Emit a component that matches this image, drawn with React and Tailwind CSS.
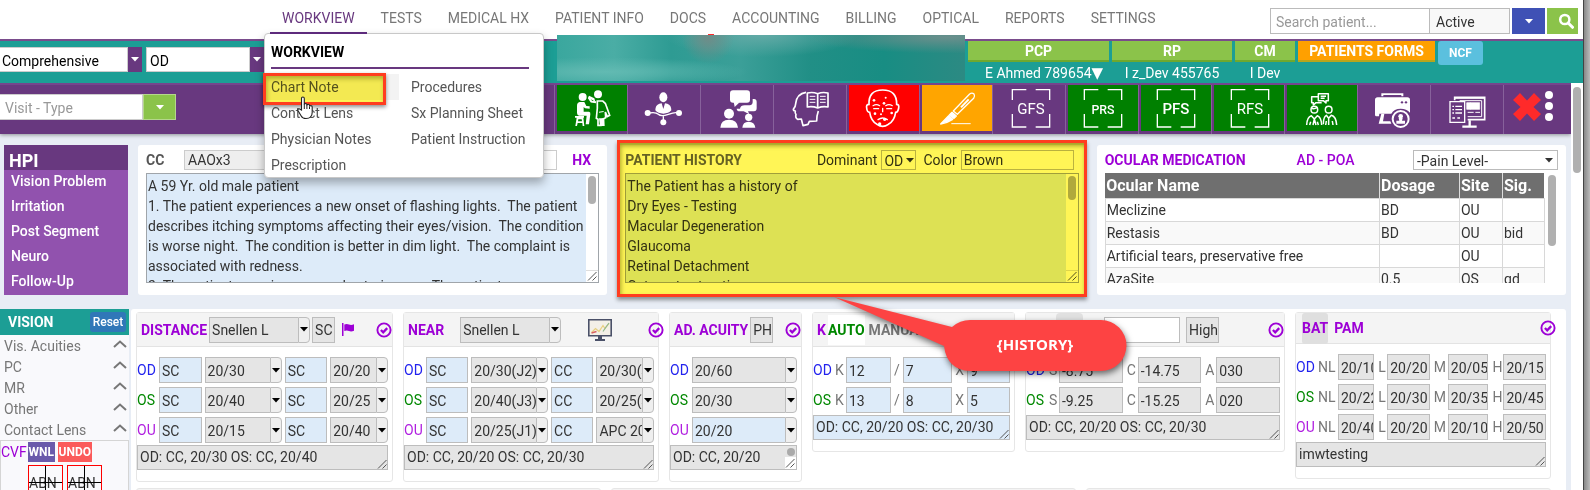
import React from "react";

const NAV = ["WORKVIEW", "TESTS", "MEDICAL HX", "PATIENT INFO", "DOCS", "ACCOUNTING", "BILLING", "OPTICAL", "REPORTS", "SETTINGS"];

const MENU = [
  ["Chart Note", "Procedures"],
  ["Contact Lens", "Sx Planning Sheet"],
  ["Physician Notes", "Patient Instruction"],
  ["Prescription", ""],
];

const MEDS = [
  ["Meclizine", "BD", "OU", ""],
  ["Restasis", "BD", "OU", "bid"],
  ["Artificial tears, preservative free", "", "OU", ""],
  ["AzaSite", "0.5", "OS", "qd"],
];

const COMPLAINT = `A 59 Yr. old male patient
1. The patient experiences a new onset of flashing lights.  The patient
describes itching symptoms affecting their eyes/vision.  The condition
is worse night.  The condition is better in dim light.  The complaint is
associated with redness.
2. The patient experiences a red exterior eye.  The patient`;

const HISTORY = `The Patient has a history of
Dry Eyes - Testing
Macular Degeneration
Glaucoma
Retinal Detachment
Cataract extraction`;

const EYE = { OD: "text-[#2222ee]", OS: "text-[#008800]", OU: "text-[#b01fe0]" };

function Caret({ className = "text-black" }) {
  return (
    <svg viewBox="0 0 8 5" className={`h-[5px] w-2 shrink-0 ${className}`} aria-hidden="true">
      <path d="M0 0h8L4 4.5z" fill="currentColor" />
    </svg>
  );
}

function Check({ className = "" }) {
  return (
    <svg viewBox="0 0 16 16" className={`size-4 shrink-0 ${className}`} fill="none" stroke="#9d00d6" aria-hidden="true">
      <circle cx="8" cy="8" r="6.6" strokeWidth="1.9" />
      <path d="M4.9 8l2.3 2.3 4-4.2" strokeWidth="2.3" />
    </svg>
  );
}

function Grip() {
  return (
    <svg viewBox="0 0 10 10" className="pointer-events-none col-start-1 row-start-1 mr-px mb-px size-[10px] self-end justify-self-end" stroke="#555" strokeWidth="1" aria-hidden="true">
      <path d="M1 9.5L9.5 1M5.5 9.5L9.5 5.5" />
    </svg>
  );
}

function Box({ value, label, blue = false, className = "" }) {
  return (
    <input
      aria-label={label}
      defaultValue={value}
      className={`h-[26px] min-w-0 border border-[#bdbdbd] pt-px pl-[2px] text-[#333] ${blue ? "bg-[#ddebf9]" : "bg-[#e5e5e5]"} ${className}`}
    />
  );
}

function Combo({ value, label, blue = false, className = "" }) {
  return (
    <div className={`flex min-w-0 ${className}`}>
      <Box value={value} label={label} blue={blue} className="flex-1 border-r-0" />
      <button aria-label={`${label} options`} className="flex w-3 shrink-0 items-center justify-center rounded-r-[4px] border border-[#bdbdbd] bg-[#efefef]">
        <Caret />
      </button>
    </div>
  );
}

function Card({ header, headerClass = "h-[34px]", children }) {
  return (
    <section className="min-w-0 rounded-[3px] border border-[#e6e6e6] bg-white">
      <div className={`flex items-center border-b border-[#e3e3e3] bg-[#f4f4f4] pl-1 ${headerClass}`}>{header}</div>
      <div className="pt-[10px] pr-1 pb-[11px]">{children}</div>
    </section>
  );
}

function Title({ children }) {
  return <h3 className="font-bold whitespace-nowrap text-[#9d00d6]">{children}</h3>;
}

function EyeRow({ eye, children }) {
  return (
    <div className="mb-1 flex items-center last:mb-0">
      <span className={`w-[22px] shrink-0 ${EYE[eye]}`}>{eye}</span>
      {children}
    </div>
  );
}

function Summary({ value, label, blue = false }) {
  return (
    <div className="mt-[2px] grid">
      <textarea
        aria-label={label}
        defaultValue={value}
        rows={1}
        className={`col-start-1 row-start-1 block h-[25px] w-full resize-none overflow-hidden border border-[#bdbdbd] pt-px pl-[2px] leading-5 text-[#333] ${blue ? "bg-[#ddebf9]" : "bg-[#e5e5e5]"}`}
      />
      <Grip />
    </div>
  );
}

function AcuityRows({ rows, name }) {
  return (
    <div>
      {rows.map(([eye, a, b, c, d]) => (
        <EyeRow key={eye} eye={eye}>
          <div className="flex min-w-0 flex-1 gap-[3px]">
            <Box value={a} label={`${name} ${eye} correction 1`} blue className="flex-40" />
            <Combo value={b} label={`${name} ${eye} acuity 1`} className="flex-80" />
            <Box value={c} label={`${name} ${eye} correction 2`} blue className="flex-40" />
            <Combo value={d} label={`${name} ${eye} acuity 2`} className="flex-60" />
          </div>
        </EyeRow>
      ))}
    </div>
  );
}

function NoteArea({ value, label, thumb }) {
  return (
    <div className="mt-[3px] flex h-[110px] border border-[#a0a5aa]">
      <textarea
        aria-label={label}
        defaultValue={value}
        className="block min-w-0 flex-1 resize-none overflow-hidden bg-[#ddebf9] pt-[2px] pl-px leading-5 whitespace-pre text-[#333]"
      />
      <div className="flex w-3 flex-col items-center bg-white pt-[2px]">
        <div className={`w-2 rounded-full bg-[#b0b0b0] ${thumb}`} />
        <div className="mt-auto grid h-[12px] w-full border-t border-[#ddd]">
          <Grip />
        </div>
      </div>
    </div>
  );
}

function Frame({ text, x = 52, size = 45, weight = 400 }) {
  return (
    <g>
      <path
        d={`M${x} 45V14h42M${x + 70} 14h42v31M${x + 112} 87v39h-42M${x + 42} 126h-42V87`}
        fill="none"
        stroke="#fff"
        strokeWidth="4"
      />
      <text x={x + 56} y={88} textAnchor="middle" fontFamily="Roboto, sans-serif" fontSize={size} fontWeight={weight} fill="#fff">
        {text}
      </text>
    </g>
  );
}

const TILES = [
  {
    name: "Exam",
    bg: "bg-[#008000]",
    art: (
      <g fill="#fff">
        <circle cx="77" cy="36" r="12" />
        <path d="M68 51h14l6 12 10 1v7l-14-1-4-4v14h16q5 1 4 8l-4 30h-10l3-26H66q-6-1-6-8V62q0-9 8-11z" />
        <path d="M54 93h27v5h-2l3 25h-5l-1-9H62l-2 9h-5l4-25h-5zM64 103l-1 6h12l-1-6z" />
        <circle cx="123" cy="28" r="12" />
        <path d="M112 40l-16-8-3 6 22 12" />
        <path d="M95 38l8 12 14 2" fill="none" stroke="#fff" strokeWidth="6" />
        <path d="M121 48h16q9 6 11 15l10 28-7 4-6-14 1 17-10 5-4 18h-9v-18l-5-3 3-30z" fill="none" stroke="#fff" strokeWidth="5" />
        <path d="M126 100h16l1 23h-14zM126 80l14-2v3l-14 2z" />
      </g>
    ),
  },
  {
    name: "Referral",
    bg: "",
    art: (
      <g fill="#fff">
        <ellipse cx="100" cy="37" rx="12" ry="15" />
        <path d="M76 76q0-16 12-20l7-1 5 17 5-17 7 1q12 4 12 20-8 10-24 10t-24-10z" />
        <g fill="none" stroke="#fff" strokeWidth="4">
          <path d="M57 84q20-4 28 4t30 0 28-4M100 92v16" />
        </g>
        <circle cx="53" cy="84" r="9" />
        <circle cx="147" cy="84" r="9" />
        <circle cx="100" cy="112" r="9" />
      </g>
    ),
  },
  {
    name: "Consult",
    bg: "",
    art: (
      <g fill="#fff">
        <rect x="81" y="16" width="60" height="37" rx="9" />
        <path d="M92 50l3 16 15-14z" />
        <path d="M149 42h4q8 0 8 9v19q0 9-8 9h-18l4 9-17-9h-12q-8 0-9-8h10q2-10 14-10h15q9-1 9-10z" />
        <circle cx="78" cy="86" r="15" />
        <path d="M52 128q1-24 26-24t27 24z" />
        <circle cx="137" cy="97" r="11" />
        <path d="M118 128q1-18 19-18t20 18z" />
      </g>
    ),
  },
  {
    name: "Education",
    bg: "",
    art: (
      <g fill="none" stroke="#fff" strokeWidth="5" strokeLinejoin="round">
        <path d="M90 22Q62 26 59 56q0 8-7 17 0 5 6 5-2 7 2 10-3 11 5 15l11-1 5 20 15-4 4-9 22-1q0-16 5-30" />
        <path d="M94 24q16-4 31 2 15-6 31-2v42q-16-3-31 3-15-6-31-3zM125 26v42" />
        <path d="M101 34h17M101 43h17M101 52h17M132 34h17M132 43h17M132 52h17" strokeWidth="3" />
      </g>
    ),
  },
  {
    name: "Allergy",
    bg: "bg-[#ff0000]",
    art: (
      <g fill="none" stroke="#fff" strokeWidth="5" strokeLinecap="round">
        <path d="M60 58Q58 15 101 15t42 43q8 0 6 11-2 13-9 13-4 26-22 36-17 12-34 0-18-10-22-36-8 0-9-13-2-11 7-11z" />
        <path d="M72 62q10-6 20 0M110 62q10-6 20 0M74 71h15M113 71h15" strokeWidth="3.5" />
        <path d="M101 70v10M87 104q14-10 28 0" strokeWidth="4" />
        <g fill="#fff" stroke="none">
          <circle cx="75" cy="46" r="4" /><circle cx="110" cy="38" r="3" /><circle cx="105" cy="55" r="4" /><circle cx="96" cy="88" r="3" />
          <circle cx="128" cy="84" r="4" /><circle cx="78" cy="86" r="4" /><circle cx="107" cy="103" r="5" /><circle cx="92" cy="117" r="5" />
        </g>
      </g>
    ),
  },
  {
    name: "Procedure",
    bg: "bg-[#ffa500]",
    art: (
      <g fill="none" stroke="#fff" strokeWidth="4" strokeLinejoin="round">
        <path d="M94 78L143 27q7-5 13 0 4 7-1 13L106 88z" />
        <path d="M117 67l23-24" strokeWidth="6" />
        <path d="M90 82l13 11-7 7-14-10z" fill="#fff" />
        <path d="M80 92l12 11q-15 10-36 14z" fill="#fff" />
        <path d="M88 116h58" strokeWidth="3" />
      </g>
    ),
  },
  { name: "GFS", bg: "", art: <Frame text="GFS" /> },
  { name: "PRS", bg: "bg-[#008000]", art: <Frame text="PRS" x={49} size={37} weight={500} /> },
  { name: "PFS", bg: "bg-[#008000]", art: <Frame text="PFS" x={49} weight={500} /> },
  { name: "RFS", bg: "bg-[#008000]", art: <Frame text="RFS" /> },
  {
    name: "Discussion",
    bg: "bg-[#008000]",
    art: (
      <g fill="none" stroke="#fff" strokeWidth="4.5" strokeLinejoin="round">
        <path d="M94 26h30v21h-7v7l-8-7H94zM101 34h16M101 40h12" />
        <path d="M94 35H74v18h5v7l8-7h17" />
        <circle cx="82" cy="74" r="10" />
        <circle cx="125" cy="74" r="10" />
        <path d="M73 70q9 3 18-3" />
        <path d="M59 120q1-24 14-28l9 10 9-10q12 4 13 28M68 120l3-10M94 120l-3-10M82 102l-4 18M82 102l5 18" />
        <path d="M109 118q0-22 9-27l7 9 8-9q14 3 16 29M125 100v20M116 120l2-12M138 120l-2-12" />
      </g>
    ),
  },
  {
    name: "Print",
    bg: "",
    art: (
      <g fill="#fff">
        <path d="M64 34v-9h66v9h-6v-4H70v4z" />
        <path d="M53 37h89q8 0 8 8v38q-10-12-28-12-20 0-28 15H58l-1 8H49q-4 0-4-5V45q0-8 8-8z" />
        <circle cx="126" cy="52" r="3.5" fill="#68387f" /><circle cx="138" cy="52" r="3.5" fill="#68387f" />
        <path d="M64 86h9l-4 23h22l3 7H56z" />
        <circle cx="122" cy="102" r="24" fill="none" stroke="#fff" strokeWidth="6" />
        <circle cx="122" cy="94" r="7" />
        <path d="M116 99h12l-2 8h9v9h-26v-9h9z" />
      </g>
    ),
  },
  {
    name: "Devices",
    bg: "",
    art: (
      <g fill="none" stroke="#fff" strokeWidth="5">
        <path d="M65 46V37h90v67h-51" />
        <path d="M66 40h88M80 47h66v48h-42" strokeWidth="3" />
        <path d="M101 53h39v20h-39z" fill="#fff" strokeWidth="2" />
        <path d="M104 82h18M127 82h14M112 53v20" strokeWidth="3" />
        <path d="M51 50h44v62H51z" strokeWidth="4" />
        <path d="M58 64h5M67 64h20M58 74h5M67 74h20M58 84h5M67 84h20M58 99h8M73 99h8" strokeWidth="4" />
        <path d="M110 106v16M88 125h43" strokeWidth="7" />
      </g>
    ),
  },
];

function WorkviewMenu() {
  return (
    <div className="absolute top-[33px] left-[264px] z-30 h-[145px] w-[280px] rounded-[4px] border border-[#c8c8c8] bg-white px-[6px] pt-2 text-[#555] shadow-[0_5px_10px_rgba(0,0,0,0.3)]">
      <h2 className="w-[258px] border-b-2 border-[#68387f] pb-[5px] font-bold text-black">WORKVIEW</h2>
      <div className="mt-[5px] grid grid-cols-[140px_1fr]">
        {MENU.flat().map((item, i) =>
          item ? (
            <a key={i} href="#menu" className={`-ml-[6px] h-[26px] pl-[6px] leading-[26px] whitespace-nowrap ${i === 0 ? "mr-3 bg-[#f3f3f3]" : ""}`}>
              {item}
            </a>
          ) : null
        )}
      </div>
      <div className="absolute top-[39px] -left-[2px] h-8 w-[123px] bg-[#fff556] mix-blend-multiply" />
      <div className="absolute top-[39px] -left-[2px] h-8 w-[123px] border-[3px] border-[#ff3d1f] shadow-[0_2px_4px_rgba(0,0,0,0.45),inset_1px_3px_4px_rgba(90,90,0,0.4)]" />
      <svg viewBox="0 0 18 24" className="absolute top-[62px] left-8 h-6 w-[18px]" aria-hidden="true">
        <path
          d="M4.5 14V2.6q0-1.6 1.4-1.6t1.4 1.6V8.500q0-1 1.300-1t1.300 1v1q0-1.200 1.300-1.200t1.300 1.300v1q0-1 1.300-1t1.400 1.300v5.500q0 3-1.700 4.600-1.300 1.500-4.500 1.500-3.600 0-4.800-2.500L1.200 15q-.8-1.500.2-2t1.700.3z"
          fill="#fff"
          stroke="#222"
          strokeWidth="1.100"
        />
        <path d="M7.300 8v5M9.900 9v4M12.500 10.500V13" stroke="#222" strokeWidth="1" />
      </svg>
    </div>
  );
}

function TopNav() {
  return (
    <header className="flex h-[39px] items-start bg-white">
      <nav className="flex gap-[26px] pl-[282px]">
        {NAV.map((item, i) => (
          <a key={item} href="#nav" className={`pt-2 leading-5 whitespace-nowrap ${i === 0 ? "text-[#68387f]" : "text-[#777]"}`}>
            {item}
          </a>
        ))}
      </nav>
      <div className="absolute top-8 left-[270px] z-40 h-[2px] w-[97px] bg-[#5d2a7c]" />
      <form className="mt-2 mr-[5px] ml-auto flex h-[26px]">
        <input aria-label="Search patient" placeholder="Search patient..." className="w-40 border border-[#bbb] bg-white pt-[2px] pl-[5px] placeholder:text-[#999]" />
        <input aria-label="Status" defaultValue="Active" className="w-20 border border-l-0 border-[#bbb] bg-[#f8f8f8] pt-[2px] pl-[6px] text-[#333]" />
        <button type="button" aria-label="Status options" className="ml-[2px] flex w-[33px] items-center justify-center bg-[#3f51b5]">
          <Caret className="text-white" />
        </button>
        <button type="button" aria-label="Search" className="ml-[2px] flex w-[31px] items-center justify-end bg-[#8bc34a] pr-1">
          <svg viewBox="0 0 16 16" className="size-4" fill="none" stroke="#fff" aria-hidden="true">
            <circle cx="6.800" cy="6.500" r="4.600" strokeWidth="2.500" />
            <path d="M10.200 10l4.300 4.300" strokeWidth="3" strokeLinecap="round" />
          </svg>
        </button>
      </form>
    </header>
  );
}

function Provider({ role, name, className, nameClass = "text-center" }) {
  return (
    <div className={`shrink-0 ${className}`}>
      <div className="h-[21px] border-b-2 border-[#6fa82e] bg-[#8bc34a] text-center leading-5 font-bold text-white">{role}</div>
      <div className={`text-white leading-[22px] whitespace-nowrap ${nameClass}`}>{name}</div>
    </div>
  );
}

function PatientBar() {
  return (
    <div className="flex h-[44px] border-t-2 border-[#7a4c8c] bg-[#1c9e95]">
      <div className="flex w-[557px] shrink-0 gap-1 pt-[6px]">
        <div className="flex h-[25px] w-[142px]">
          <input aria-label="Visit template" defaultValue="Comprehensive" className="min-w-0 flex-1 border border-l-0 border-[#ccc] bg-white pt-[2px] pl-[2px] text-black" />
          <button aria-label="Visit template options" className="flex w-[14px] items-center justify-center bg-[#68387f]"><Caret className="text-white" /></button>
        </div>
        <div className="flex h-[25px] w-[118px]">
          <input aria-label="Eye" defaultValue="OD" className="min-w-0 flex-1 border border-[#ccc] bg-white pt-[2px] pl-[3px] text-black" />
          <button aria-label="Eye options" className="flex w-[14px] items-center justify-center bg-[#68387f]"><Caret className="text-white" /></button>
        </div>
      </div>
      <div className="z-10 -mt-[6px] mr-[3px] h-[46px] min-w-0 flex-1 bg-[radial-gradient(circle_at_37%_6%,#6f8c88_0%,transparent_10%),radial-gradient(ellipse_at_96%_5%,#6a8f8c_0%,transparent_26%),radial-gradient(ellipse_at_50%_0%,#62aaa6_0%,transparent_34%),radial-gradient(ellipse_at_12%_80%,#62bab2_0%,transparent_28%),linear-gradient(90deg,#3aa79e_0%,#4aada5_14%,#2e9b93_28%,#3b9f98_45%,#218f86_62%,#188d83_80%,#2c8a83_100%)]">
        <div className="-mt-px ml-[37%] h-px w-[6px] bg-[#ff2a2a]" />
      </div>
      <div className="flex shrink-0 gap-[3px] pr-[100px]">
        <Provider
          role="PCP"
          name={<>E Ahmed 789654<span className="font-['DejaVu_Sans',sans-serif] text-[15px]">▼</span></>}
          className="w-[141px]"
          nameClass="pl-[17px]"
        />
        <Provider role="RP" name="I z_Dev 455765" className="w-[120px]" />
        <Provider role="CM" name="I Dev" className="w-[60px]" />
        <button className="h-[21px] w-[137px] border-b-2 border-[#b8a51c] bg-[#ffa000] leading-5 font-bold whitespace-nowrap text-white">PATIENTS FORMS</button>
        <button className="h-6 w-[45px] rounded-[3px] bg-[#5bc0de] text-[12px] font-bold text-white">NCF</button>
      </div>
    </div>
  );
}

function ToolBar() {
  return (
    <div className="relative flex h-[51px] border-t-2 border-[#75458d] bg-[#68387f] shadow-[0_1px_4px_rgba(0,0,0,0.4)]">
      <div className="mt-[9px] flex h-[26px] w-44">
        <input aria-label="Visit type" placeholder="Visit - Type" className="min-w-0 flex-1 border border-l-0 border-[#ccc] bg-white pt-px pl-[5px] placeholder:text-[#999]" />
        <button aria-label="Visit type options" className="flex w-[33px] items-center justify-center border border-[#b5d68c] bg-[#8bc34a]"><Caret className="text-white" /></button>
      </div>
      <div className="ml-auto flex">
        {TILES.map((t) => (
          <div key={t.name} className="w-[73px] border-l border-[#87619b] pl-[2px]">
            <button aria-label={t.name} className={`block h-[46px] w-[70px] ${t.bg}`}>
              <svg viewBox="0 0 210 138" className="h-[46px] w-[70px]">{t.art}</svg>
            </button>
          </div>
        ))}
        <div className="flex w-[68px] gap-1 border-l border-[#87619b] pt-[5px] pl-[9px]">
          <button aria-label="Close" className="self-start pt-[3px]">
            <svg viewBox="0 0 28 28" className="size-7" aria-hidden="true">
              <path d="M7 0l7 7.500L21 0l7 7-7.500 7L28 21l-7 7-7-7.500L7 28l-7-7 7.500-7L0 7z" fill="#ff2a2a" />
            </svg>
          </button>
          <button aria-label="More" className="self-start">
            <svg viewBox="0 0 8 32" className="h-8 w-2" fill="#fff" aria-hidden="true">
              <circle cx="4" cy="5" r="4" /><circle cx="4" cy="16" r="4" /><circle cx="4" cy="27" r="4" />
            </svg>
          </button>
        </div>
      </div>
    </div>
  );
}

function TopCards() {
  return (
    <div className="flex gap-[10px] pt-[11px] pr-[5px] pl-1">
      <aside className="h-[150px] w-[124px] shrink-0 bg-[#9152ae] text-white">
        <h2 className="h-[25px] bg-[#68387f] pt-px pl-[5px] text-[18px] leading-[30px] font-bold">HPI</h2>
        {["Vision Problem", "Irritation", "Post Segment", "Neuro", "Follow-Up"].map((t) => (
          <a key={t} href="#hpi" className="block h-[25px] pl-[7px] leading-[22px] font-medium">{t}</a>
        ))}
      </aside>

      <section className="min-w-0 flex-1 rounded-[3px] bg-white px-2 pt-[5px]">
        <div className="flex h-5 items-center">
          <label htmlFor="cc" className="w-[38px] font-bold text-[#555]">CC</label>
          <input id="cc" defaultValue="AAOx3" className="h-5 min-w-0 flex-1 border border-[#ccc] bg-linear-to-r from-[#eee] from-90% to-white to-95% pl-[3px] text-[#333]" />
          <a href="#hx" className="w-[42px] pl-[15px] font-bold text-[#9d00d6]">HX</a>
        </div>
        <NoteArea value={COMPLAINT} label="Chief complaint" thumb="h-7" />
      </section>

      <section className="relative min-w-0 flex-1 rounded-[3px] bg-white px-2 pt-[5px]">
        <div className="flex h-5 items-center pr-[5px] text-[#333]">
          <h3 className="font-bold text-[#666]">PATIENT HISTORY</h3>
          <label htmlFor="dom" className="mr-1 ml-auto">Dominant</label>
          <div className="mr-[7px] grid w-[35px] items-center">
            <select id="dom" className="col-start-1 row-start-1 h-5 appearance-none border border-[#bbb] bg-white pl-[2px]"><option>OD</option></select>
            <Caret className="pointer-events-none col-start-1 row-start-1 mr-[2px] justify-self-end text-[#333]" />
          </div>
          <label htmlFor="col" className="mr-1">Color</label>
          <input id="col" defaultValue="Brown" className="h-5 w-[113px] border border-[#bbb] pl-[2px]" />
        </div>
        <NoteArea value={HISTORY} label="Patient history" thumb="h-6" />
        <div className="pointer-events-none absolute inset-x-0 -top-[5px] -bottom-[2px] bg-[#fff556] mix-blend-multiply" />
        <div className="pointer-events-none absolute inset-x-0 -top-[5px] -bottom-[2px] border-[3px] border-[#ff3d1f] shadow-[0_3px_4px_rgba(0,0,0,0.4),inset_1px_3px_4px_rgba(100,100,0,0.55)]" />
        <svg viewBox="0 0 310 90" className="pointer-events-none absolute top-[150px] left-[214px] z-20 h-[90px] w-[310px] overflow-visible drop-shadow-[1px_3px_3px_rgba(0,0,0,0.55)]">
          <path d="M3 2L121 32Q129 25 139 25H270A25.500 25.500 0 0 1 270 76H139Q116 75 113 51z" fill="#fd4343" />
          <text x="204" y="55" textAnchor="middle" fill="#fff" fontFamily="'Open Sans', sans-serif" fontSize="15" fontWeight="700">{"{HISTORY}"}</text>
        </svg>
      </section>

      <section className="min-w-0 flex-1 rounded-[3px] bg-white px-2 pt-[5px]">
        <div className="flex h-5 items-center">
          <Title>OCULAR MEDICATION</Title>
          <a href="#poa" className="ml-[51px] font-medium text-[#9d00d6]">AD - POA</a>
          <div className="ml-auto grid w-[145px] items-center">
            <select aria-label="Pain level" className="col-start-1 row-start-1 h-5 appearance-none border border-[#bbb] bg-white pl-[3px] text-[#333]"><option>-Pain Level-</option></select>
            <Caret className="pointer-events-none col-start-1 row-start-1 mr-[5px] justify-self-end text-[#333]" />
          </div>
        </div>
        <div className="mt-[3px] flex h-[110px] gap-[3px] overflow-hidden">
          <table className="h-[118px] flex-1 table-fixed border-collapse self-start text-[#333]">
            <thead>
              <tr className="h-[25px] bg-[#6f6f6f] text-left text-[16px] text-white">
                <th className="pt-[2px] pl-px font-bold">Ocular Name</th>
                <th className="w-20 border-l border-[#ddd] pt-[2px] pl-px font-bold">Dosage</th>
                <th className="w-[43px] border-l border-[#ddd] pt-[2px] pl-px font-bold">Site</th>
                <th className="w-[42px] border-l border-[#ddd] pt-[2px] pl-px font-bold">Sig.</th>
              </tr>
            </thead>
            <tbody>
              {MEDS.map((row, i) => (
                <tr key={row[0]} className={`h-[23px] ${i % 2 ? "bg-[#f9f9f9]" : "bg-white"}`}>
                  {row.map((cell, j) => (
                    <td key={j} className="border border-[#d8d8d8] pl-px leading-5">{cell}</td>
                  ))}
                </tr>
              ))}
            </tbody>
          </table>
          <div className="mt-[2px] mr-[2px] h-[71px] w-2 shrink-0 rounded-full bg-[#b0b0b0]" />
        </div>
      </section>
    </div>
  );
}

function VisionSide() {
  return (
    <aside className="w-[129px] shrink-0 bg-[#f9f9fc]">
      <div className="flex h-[26px] items-center justify-between bg-[#1c9e95] pr-[3px] pl-2">
        <h2 className="font-bold text-white">VISION</h2>
        <button className="h-5 w-9 rounded-[3px] bg-[#3077b8] text-[12px] font-medium text-white">Reset</button>
      </div>
      {["Vis. Acuities", "PC", "MR", "Other", "Contact Lens"].map((t) => (
        <a key={t} href="#vision" className="flex h-[21px] items-center justify-between pr-[2px] pl-1 text-[#777]">
          {t}
          <svg viewBox="0 0 14 8" className="mb-1 h-2 w-[14px]" fill="none" stroke="#777" strokeWidth="2" aria-hidden="true"><path d="M1 7l6-5.500L13 7" /></svg>
        </a>
      ))}
      <div className="h-[100px] border border-[#d5d5d5]">
        <div className="mt-px flex h-5 items-center gap-[3px] leading-5">
          <span className="-mr-[2px] text-[#9d00d6]">CVF</span>
          <button className="w-[27px] bg-[#6a5aab] text-[12px] font-bold text-white">WNL</button>
          <button className="w-[34px] bg-[#fb5a5a] text-[12px] font-bold text-white">UNDO</button>
        </div>
        <div className="mt-[3px] ml-[27px] flex gap-1">
          {[0, 1].map((k) => (
            <div key={k} className="grid size-[35px] border border-[#ff0000]">
              <span className="col-start-1 row-start-1 self-center text-[#333]">ABN</span>
              <svg viewBox="0 0 33 33" className="col-start-1 row-start-1 size-[33px]" stroke="#000" aria-hidden="true"><path d="M16.500 0v33M0 16.500h33" /></svg>
            </div>
          ))}
        </div>
      </div>
    </aside>
  );
}

function VisionPanel() {
  return (
    <div className="min-w-0 flex-1 rounded-t-[3px] bg-white pt-[3px] pr-[15px] pl-[5px]">
      <div className="grid grid-cols-[257fr_256fr_133fr_203fr_260fr_256fr] items-start gap-[10px]">
        <Card
          header={
            <>
              <Title>DISTANCE</Title>
              <Combo value="Snellen L" label="Distance chart" className="ml-[2px] w-[101px]" />
              <Box value="SC" label="Distance method" className="ml-[2px] w-[23px]" />
              <svg viewBox="0 0 12 13" className="ml-[7px] h-[13px] w-3" fill="#9d00d6" aria-hidden="true">
                <path d="M0 0h1.500v13H0zM2.300 1.500q2.500-1.200 4.700 0 2.200 1.100 5-.3v6.500q-2.800 1.400-5 .3-2.200-1.200-4.700 0z" />
              </svg>
              <Check className="ml-auto" />
            </>
          }
        >
          <AcuityRows name="Distance" rows={[["OD", "SC", "20/30", "SC", "20/20"], ["OS", "SC", "20/40", "SC", "20/25"], ["OU", "SC", "20/15", "SC", "20/40"]]} />
          <Summary value="OD: CC, 20/30 OS: CC, 20/40" label="Distance summary" />
        </Card>

        <Card
          header={
            <>
              <Title>NEAR</Title>
              <Combo value="Snellen L" label="Near chart" className="ml-4 w-[101px]" />
              <svg viewBox="0 0 24 22" className="ml-[27px] h-[22px] w-6" fill="none" aria-hidden="true">
                <path d="M.8.8h22.400v16H.8z" fill="#f4f0e8" stroke="#4a5068" strokeWidth="1.600" />
                <path d="M10 17h4v3h3v2H7v-2h3z" fill="#4a5068" />
                <path d="M3.500 13.500l4-4 3.500 3 4-6 2 3 4-5" stroke="#e8d080" strokeWidth="1.200" />
                <path d="M3.500 14l5-1.500" stroke="#d86060" strokeWidth="1.500" />
                <path d="M15 12.500l3-4.500 3-4" stroke="#90b890" strokeWidth="1.200" />
              </svg>
              <Check className="-mr-[6px] ml-auto" />
            </>
          }
        >
          <AcuityRows name="Near" rows={[["OD", "SC", "20/30(J2)", "CC", "20/30(J2)"], ["OS", "SC", "20/40(J3)", "CC", "20/25(J1)"], ["OU", "SC", "20/25(J1)", "CC", "APC 20/20"]]} />
          <Summary value="OD: CC, 20/20 OS: CC, 20/30" label="Near summary" />
        </Card>

        <Card
          header={
            <>
              <Title>AD. ACUITY</Title>
              <Box value="PH" label="Pinhole" className="ml-[2px] w-[23px]" />
              <Check className="ml-auto" />
            </>
          }
        >
          {[["OD", "20/60"], ["OS", "20/30"], ["OU", "20/20"]].map(([eye, v]) => (
            <EyeRow key={eye} eye={eye}>
              <Combo value={v} label={`Acuity ${eye}`} blue={eye === "OU"} className="flex-1" />
            </EyeRow>
          ))}
          <div className="-mt-[2px] flex h-[25px] border border-[#bdbdbd] bg-[#e5e5e5]">
            <textarea aria-label="Acuity summary" rows={1} defaultValue="OD: CC, 20/20" className="min-w-0 flex-1 resize-none overflow-hidden pt-px pl-[2px] leading-5 text-[#333]" />
            <div className="flex w-[11px] flex-col items-center bg-[#e5e5e5] pt-[2px]">
              <div className="size-2 rounded-full bg-[#aaa]" />
              <div className="mt-auto grid h-3 w-full bg-white"><Grip /></div>
            </div>
          </div>
        </Card>

        <Card
          header={
            <>
              <Title>K</Title>
              <span className="ml-[2px] bg-white leading-[30px] font-bold text-[#008800]">AUTO</span>
              <span className="ml-1 font-bold text-[#777]">MANUAL</span>
            </>
          }
        >
          <div className="text-[#777]">
            {[["OD", "12", "7", "9"], ["OS", "13", "8", "5"]].map(([eye, a, b, c]) => (
              <EyeRow key={eye} eye={eye}>
                <span className="w-[11px] shrink-0">K</span>
                <Box value={a} label={`K ${eye} 1`} blue className="flex-45" />
                <span className="w-3 shrink-0 text-center">/</span>
                <Box value={b} label={`K ${eye} 2`} blue className="flex-50" />
                <span className="w-[15px] shrink-0 text-center">X</span>
                <Box value={c} label={`K ${eye} axis`} blue className="flex-43" />
              </EyeRow>
            ))}
          </div>
          <Summary value="OD: CC, 20/20 OS: CC, 20/30" label="K summary" blue />
        </Card>

        <Card
          header={
            <>
              <span className="ml-[26px] h-[33px] w-[27px] rounded-[4px] bg-[#e0e0e0]" />
              <input aria-label="Refraction" className="ml-[21px] h-[26px] w-[76px] border border-[#bdbdbd] bg-white" />
              <Box value="High" label="Level" className="ml-[6px] w-[33px]" />
              <Check className="ml-auto" />
            </>
          }
        >
          <div className="text-[#777]">
            {[["OD", "-8.75", "-14.75", "030"], ["OS", "-9.25", "-15.25", "020"]].map(([eye, s, c, a]) => (
              <EyeRow key={eye} eye={eye}>
                <span className="w-[11px] shrink-0 pl-px">S</span>
                <Box value={s} label={`Sphere ${eye}`} className="flex-1" />
                <span className="w-[15px] shrink-0 pl-1">C</span>
                <Box value={c} label={`Cylinder ${eye}`} className="flex-1" />
                <span className="w-[15px] shrink-0 pl-1">A</span>
                <Box value={a} label={`Axis ${eye}`} className="flex-1" />
              </EyeRow>
            ))}
          </div>
          <Summary value="OD: CC, 20/20 OS: CC, 20/30" label="Refraction summary" />
        </Card>

        <Card
          headerClass="h-[31px]"
          header={
            <>
              <span className="ml-[2px] rounded-[3px] bg-[#dfdfdf] leading-[31px] font-bold text-[#9d00d6]">BAT</span>
              <span className="ml-[6px] font-bold text-[#9d00d6]">PAM</span>
              <Check className="-mr-[6px] ml-auto" />
            </>
          }
        >
          <div className="text-[#777]">
            {[["OD", "20/100", "20/20", "20/05", "20/15"], ["OS", "20/22", "20/30", "20/35", "20/45"], ["OU", "20/40", "20/20", "20/10", "20/50"]].map(([eye, n, l, m, h]) => (
              <EyeRow key={eye} eye={eye}>
                <span className="w-5 shrink-0">NL</span>
                <Box value={n} label={`BAT ${eye} none`} className="flex-36" />
                <span className="w-[13px] shrink-0 pl-1">L</span>
                <Box value={l} label={`BAT ${eye} low`} className="flex-43" />
                <span className="w-[18px] shrink-0 pl-1">M</span>
                <Box value={m} label={`BAT ${eye} medium`} className="flex-41" />
                <span className="w-[15px] shrink-0 pl-1">H</span>
                <Box value={h} label={`BAT ${eye} high`} className="flex-43" />
              </EyeRow>
            ))}
          </div>
          <Summary value="imwtesting" label="BAT notes" />
        </Card>
      </div>
      <div className="mt-[6px] grid grid-cols-3 gap-[10px]">
        {[0, 1, 2].map((k) => (
          <div key={k} className="h-9 rounded-[3px] border border-[#e6e6e6] bg-[#f4f4f4]" />
        ))}
      </div>
    </div>
  );
}

export default function App() {
  return (
    <div className="flex h-screen overflow-hidden bg-white font-[Roboto,sans-serif] text-[14px] leading-5">
      <div className="relative flex min-w-0 flex-1 flex-col">
        <TopNav />
        <WorkviewMenu />
        <PatientBar />
        <div className="flex min-h-0 flex-1">
          <main className="min-w-0 flex-1 overflow-hidden bg-[#e8edf5]">
            <ToolBar />
            <TopCards />
            <div className="mt-[14px] flex gap-[2px] pr-[5px]">
              <VisionSide />
              <VisionPanel />
            </div>
          </main>
          <div className="w-3 shrink-0 bg-white px-[2px] pt-1">
            <div className="h-[86px] rounded-full bg-[#b0b0b0]" />
          </div>
        </div>
      </div>
      <div className="w-[7px] shrink-0 border-l border-[#444] bg-linear-to-r from-[#888] to-[#bbb]" />
    </div>
  );
}
